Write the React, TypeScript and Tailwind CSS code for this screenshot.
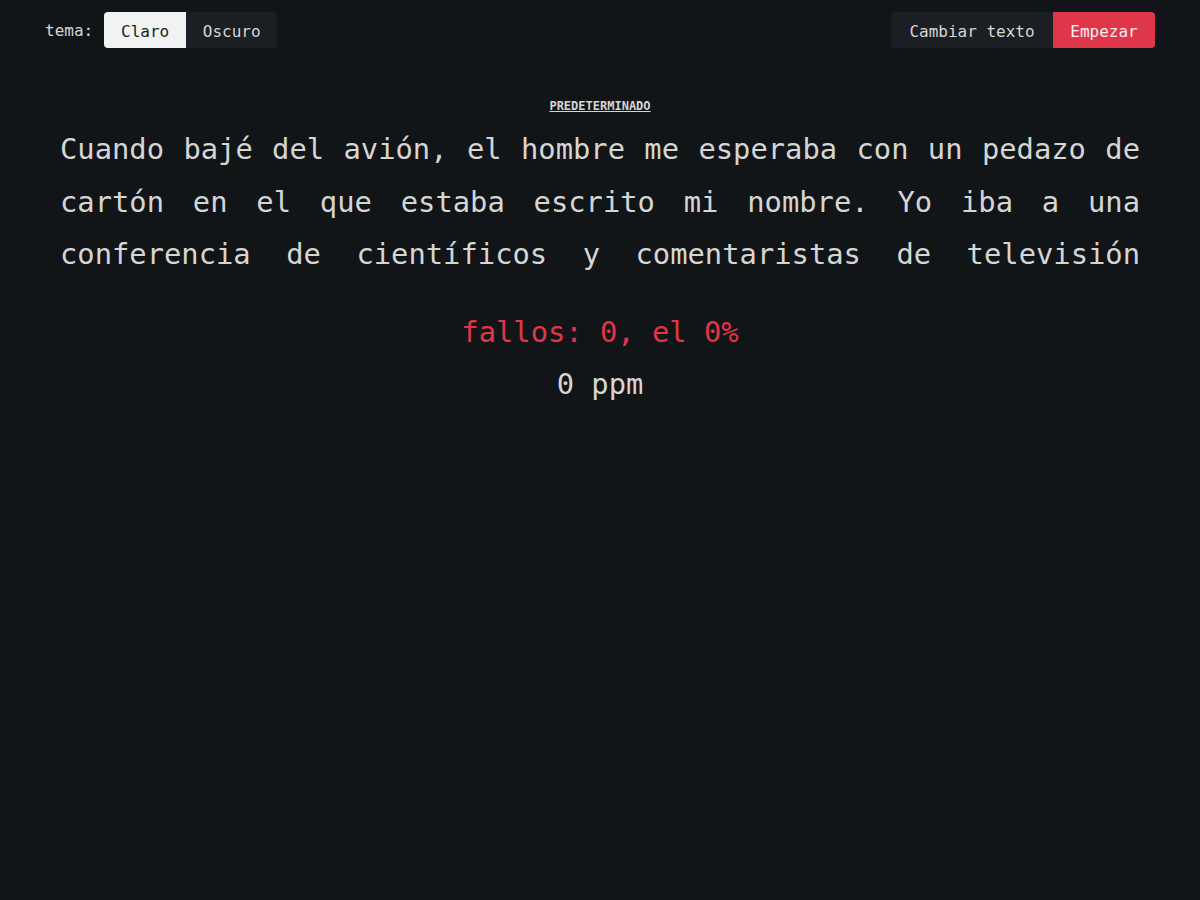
const mono = { fontFamily: '"DejaVu Sans Mono", "Liberation Mono", monospace' };

const texto =
	"Cuando bajé del avión, el hombre me esperaba con un pedazo de cartón en el que estaba escrito mi nombre. Yo iba a una conferencia de científicos y comentaristas de televisión";

export default function App() {
	return (
		<div
			className="min-h-screen w-full bg-[#121518] text-[#d5d6d4]"
			style={mono}
		>
			<header className="flex items-center justify-between px-[45px] pt-3">
				<div className="flex items-center">
					<span className="mr-[11px] pt-[2px] text-[16px]">tema:</span>
					<div className="flex h-9 overflow-hidden rounded text-[16px] leading-9">
						<button className="w-[82px] bg-[#f1f3f3] pt-[2px] text-[#1a1c1f]">Claro</button>
						<button className="w-[91px] bg-[#1b1e23] pt-[2px] text-[#d5d6d4]">Oscuro</button>
					</div>
				</div>
				<div className="flex h-9 overflow-hidden rounded text-[16px] leading-9">
					<button className="w-[162px] bg-[#1b1e23] pt-[2px] text-[#d5d6d4]">Cambiar texto</button>
					<button className="w-[102px] bg-[#e0364a] pt-[2px] text-[#f6f0f1]">Empezar</button>
				</div>
			</header>

			<main className="px-[60px] pt-[45px]">
				<div className="text-center">
					<span className="text-[12px] font-bold underline">PREDETERMINADO</span>
				</div>
				<p className="mt-[6px] text-justify text-[28.8px] leading-[52.5px] [text-align-last:justify]">
					{texto}
				</p>
				<div className="mt-[25px] text-center text-[28.8px] leading-[52px] text-[#e0364a]">
					fallos: 0, el 0%
				</div>
				<div className="text-center text-[28.8px] leading-[52px]">0 ppm</div>
			</main>
		</div>
	);
}
